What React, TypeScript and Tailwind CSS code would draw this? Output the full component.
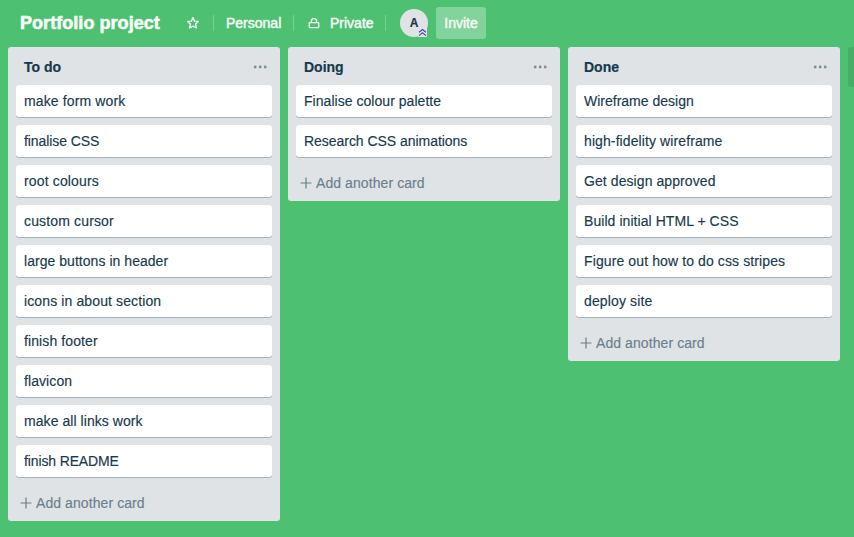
import React from "react";

type Card = { text: string; tracking: string };
type List = { title: string; cards: Card[] };

const lists: List[] = [
  {
    title: "To do",
    cards: [
      { text: "make form work", tracking: "tracking-[0.13px]" },
      { text: "finalise CSS", tracking: "tracking-[-0.08px]" },
      { text: "root colours", tracking: "tracking-[0.15px]" },
      { text: "custom cursor", tracking: "tracking-[0.15px]" },
      { text: "large buttons in header", tracking: "tracking-[0.04px]" },
      { text: "icons in about section", tracking: "tracking-[0.12px]" },
      { text: "finish footer", tracking: "tracking-[0.1px]" },
      { text: "flavicon", tracking: "tracking-[0.08px]" },
      { text: "make all links work", tracking: "tracking-[0.06px]" },
      { text: "finish README", tracking: "tracking-[-0.13px]" },
    ],
  },
  {
    title: "Doing",
    cards: [
      { text: "Finalise colour palette", tracking: "tracking-[0.04px]" },
      { text: "Research CSS animations", tracking: "tracking-[-0.04px]" },
    ],
  },
  {
    title: "Done",
    cards: [
      { text: "Wireframe design", tracking: "tracking-normal" },
      { text: "high-fidelity wireframe", tracking: "tracking-[0.1px]" },
      { text: "Get design approved", tracking: "tracking-[0.08px]" },
      { text: "Build initial HTML + CSS", tracking: "tracking-[0.06px]" },
      { text: "Figure out how to do css stripes", tracking: "tracking-[0.11px]" },
      { text: "deploy site", tracking: "tracking-[0.13px]" },
    ],
  },
];

function StarIcon() {
  return (
    <svg className="h-3.5 w-3.5" viewBox="0 0 14 14" fill="none" stroke="currentColor" strokeWidth="1.35" strokeLinejoin="round">
      <path d="M7 1.6 8.6 5.1 12.4 5.5 9.6 8.1 10.4 12 7 10.1 3.6 12 4.4 8.1 1.6 5.5 5.4 5.1Z" />
    </svg>
  );
}

function LockIcon() {
  return (
    <svg className="h-3.5 w-3.5" viewBox="0 0 14 14" fill="none" stroke="currentColor" strokeWidth="1.25">
      <rect x="2.2" y="6.5" width="9.6" height="5" rx="0.8" />
      <path d="M4.300 6.500V5C4.300 3.500 5.400 2.500 7 2.500S9.700 3.500 9.700 5V6.500" />
    </svg>
  );
}

function Divider() {
  return <span className="h-4 w-px shrink-0 bg-white/25" />;
}

function BoardHeader() {
  return (
    <header className="flex h-[47px] items-center pb-px pl-5 text-sm text-[#f6fbf8]">
      <h1 className="w-[166px] text-lg font-bold leading-6 tracking-[0.05px] [-webkit-text-stroke:0.6px_currentColor]">Portfolio project</h1>
      <button className="flex w-[27px]"><StarIcon /></button>
      <Divider />
      <span className="w-[79px] pl-3 [-webkit-text-stroke:0.45px_currentColor]">Personal</span>
      <Divider />
      <span className="flex w-[91px] items-center pl-[13px] [-webkit-text-stroke:0.45px_currentColor]">
        <LockIcon />
        <span className="pl-[9px]">Private</span>
      </span>
      <Divider />
      <span className="relative ml-3.5 flex h-7 w-7 items-center justify-center rounded-full bg-[#dfe3e6] text-xs font-bold text-[#17394d] [-webkit-text-stroke:0.2px_currentColor]">
        A
        <svg className="absolute bottom-0 right-px h-[9px] w-[9px]" viewBox="0 0 9 9" fill="none">
          <rect width="9" height="9" fill="#dfe3e6" />
          <path d="M1 4.300 4.500 1.500 8 4.300M1 7.600 4.500 4.800 8 7.600" stroke="#4f46a8" strokeWidth="1.200" />
        </svg>
      </span>
      <button className="ml-2 h-8 w-[50px] rounded-[3px] bg-white/30 [-webkit-text-stroke:0.45px_currentColor]">Invite</button>
    </header>
  );
}

function BoardList({ title, cards }: List) {
  return (
    <section className="w-[272px] shrink-0 rounded-[3px] bg-[#dfe3e6] px-2">
      <div className="flex h-[38px] items-center justify-between pb-px pl-2 pr-[5px] pt-[3px]">
        <h2 className="text-sm font-bold [-webkit-text-stroke:0.2px_currentColor]">{title}</h2>
        <svg className="h-[14px] w-[14px]" viewBox="0 0 14 14" fill="#798d99">
          <circle cx="2.200" cy="7" r="1.400" />
          <circle cx="7.200" cy="7" r="1.400" />
          <circle cx="12.200" cy="7" r="1.400" />
        </svg>
      </div>
      <ul className="flex flex-col gap-2">
        {cards.map(({ text, tracking }) => (
          <li key={text} className="flex h-8 items-center rounded-[3px] bg-white px-2 shadow-[0_1px_0_#a5b4bf] [-webkit-text-stroke:0.15px_currentColor]">
            <span className={tracking}>{text}</span>
          </li>
        ))}
      </ul>
      <button className="flex h-11 items-center pl-1 pt-2 text-[#6b808c] [-webkit-text-stroke:0.15px_currentColor]">
        <svg className="h-3 w-3" viewBox="0 0 12 12" stroke="currentColor" strokeWidth="1.200">
          <path d="M0.500 6H11.500M6 0.500V11.500" />
        </svg>
        <span className="pl-1 tracking-[0.08px]">Add another card</span>
      </button>
    </section>
  );
}

export default function App() {
  return (
    <div className="h-[537px] w-[854px] overflow-hidden bg-[#4dc071] font-['Liberation_Sans',Arial,sans-serif] text-sm text-[#17394d]">
      <BoardHeader />
      <main className="flex items-start gap-2 pl-2">
        {lists.map((list) => (
          <BoardList key={list.title} {...list} />
        ))}
        <div className="h-10 w-[272px] shrink-0 rounded-[3px] bg-[#46ae66]" />
      </main>
    </div>
  );
}
